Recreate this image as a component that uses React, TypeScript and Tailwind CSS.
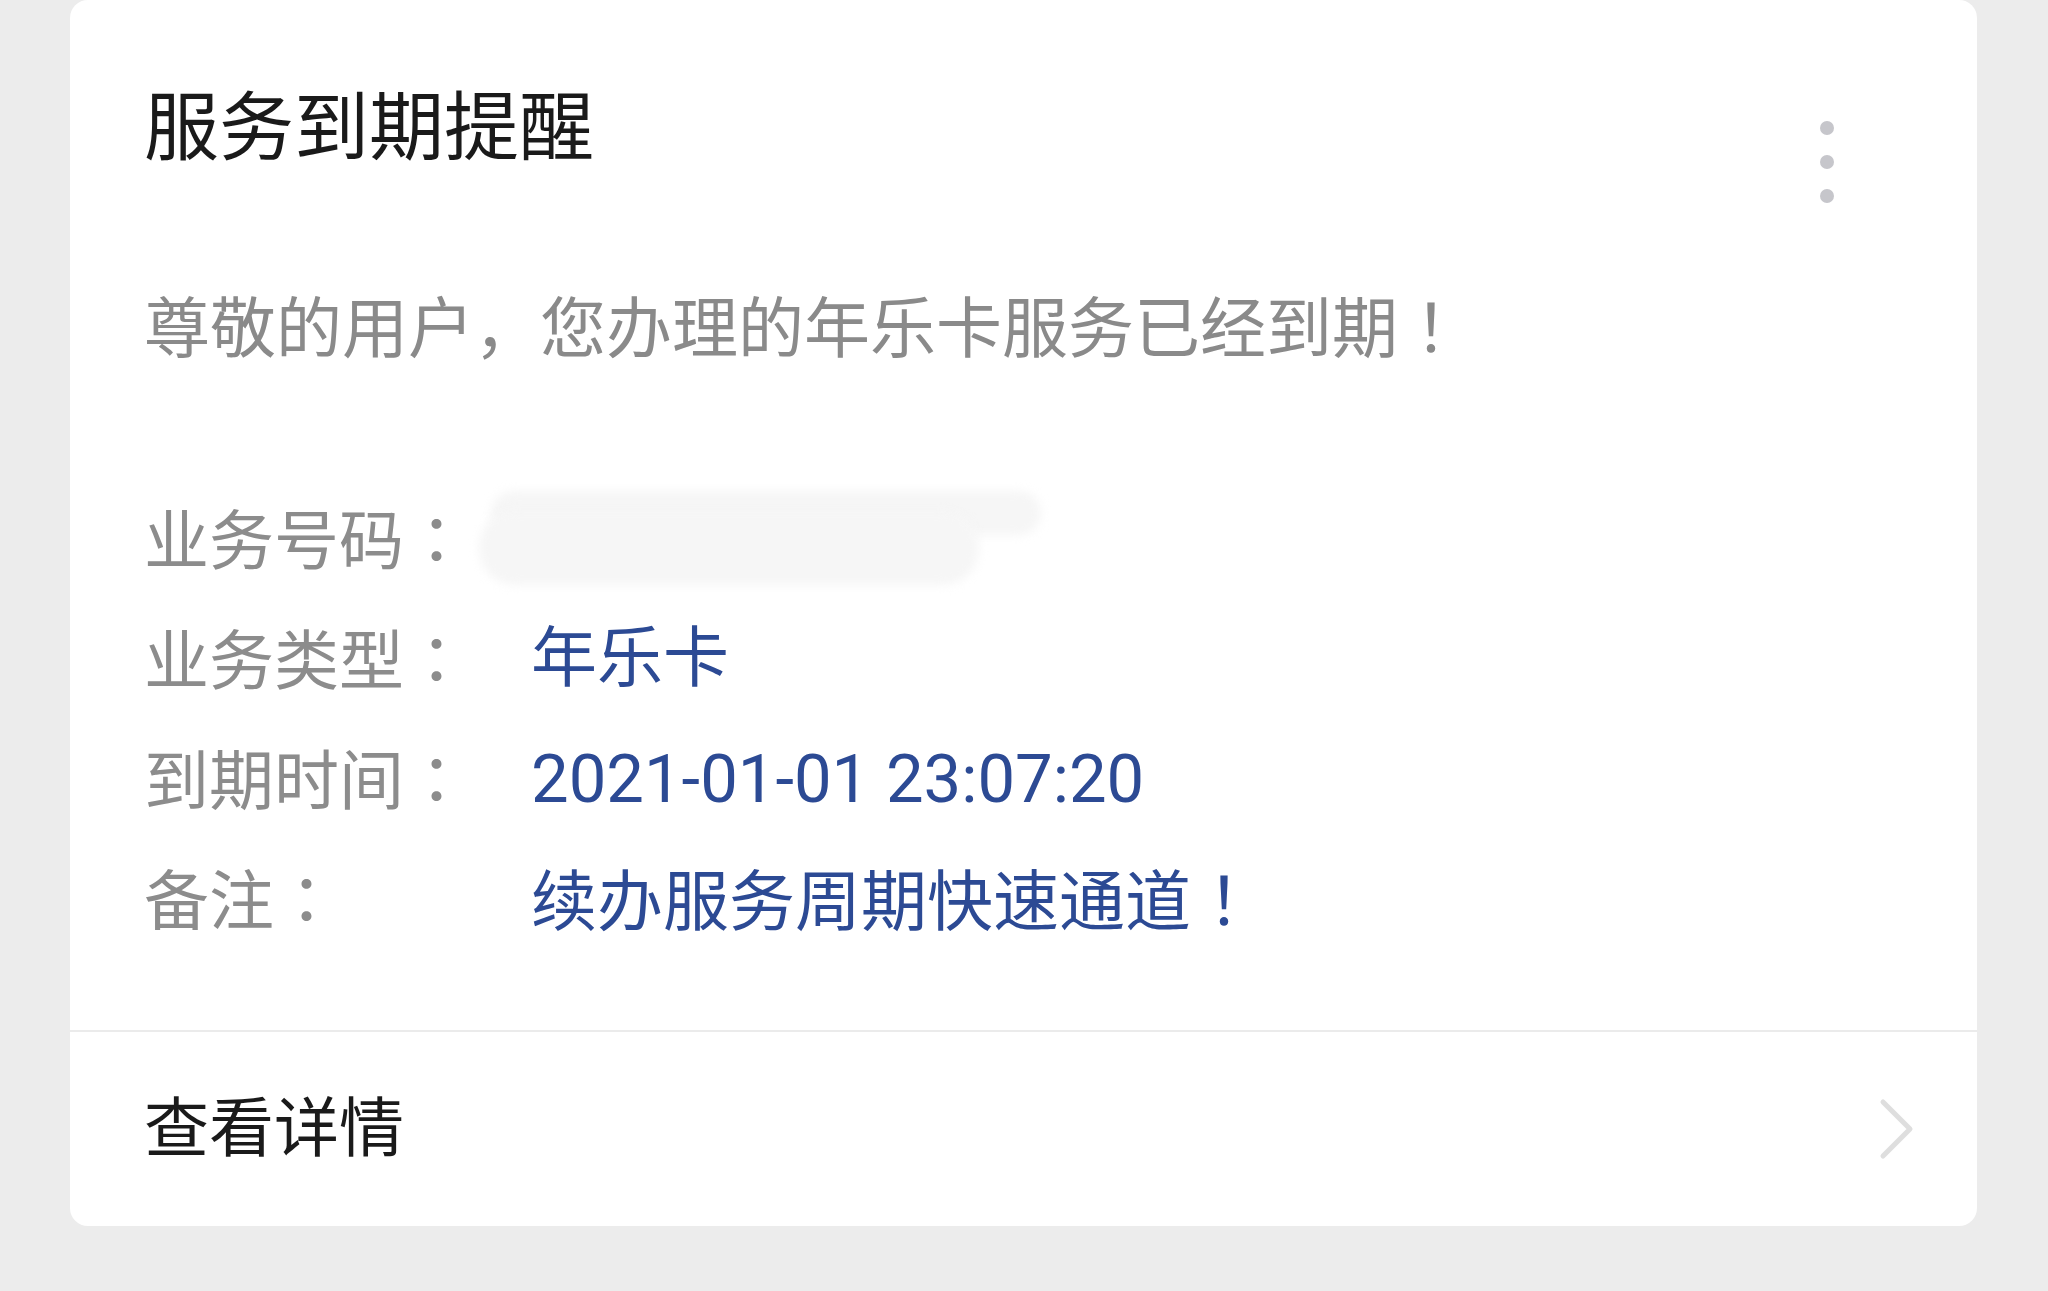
import React from "react";

const JP = "'Noto Sans CJK JP', sans-serif";

function T({ text }: { text: string }) {
  const parts = text.split(/([，：！])/);
  return (
    <>
      {parts.map((p, i) =>
        /^[，：！]$/.test(p) ? (
          <span key={i} style={{ fontFamily: JP }}>
            {p}
          </span>
        ) : (
          <React.Fragment key={i}>{p}</React.Fragment>
        )
      )}
    </>
  );
}

const rows: { label: string; value: string; blur?: boolean; num?: boolean }[] = [
  { label: "业务号码：", value: "", blur: true },
  { label: "业务类型：", value: "年乐卡" },
  { label: "到期时间：", value: "2021-01-01 23:07:20", num: true },
  { label: "备注：", value: "续办服务周期快速通道！" },
];

export default function App() {
  return (
    <div
      className="w-[2048px] h-[1291px] bg-[#ececec] overflow-hidden pl-[70px] [text-spacing-trim:space-all]"
      style={{ fontFamily: "Roboto, 'Noto Sans CJK SC', sans-serif" }}
    >
      <div className="w-[1907px] bg-white rounded-[18px] flex flex-col">
        <div className="flex items-start justify-between pl-[74px] pr-[143px] pt-[78px]">
          <div className="text-[75px] leading-[100px] text-[#1a1a1a]">服务到期提醒</div>
          <div className="mt-[43px] flex flex-col gap-[20px]">
            <div className="w-[14px] h-[14px] rounded-full bg-[#c6c6cb]" />
            <div className="w-[14px] h-[14px] rounded-full bg-[#c6c6cb]" />
            <div className="w-[14px] h-[14px] rounded-full bg-[#c6c6cb]" />
          </div>
        </div>
        <div className="pl-[74px] mt-[70px] text-[66px] leading-[100px] text-[#8a8a8a] whitespace-nowrap">
          <T text="尊敬的用户，您办理的年乐卡服务已经到期！" />
        </div>
        <div className="pl-[74px] mt-[99px] pb-[71px] flex flex-col">
          {rows.map((r) => (
            <div key={r.label} className="flex items-center h-[120px] text-[65px] leading-[120px] whitespace-nowrap">
              <div className="w-[387px] shrink-0 text-[#8c8c8c]">
                <T text={r.label} />
              </div>
              {r.blur ? (
                <div className="relative w-[580px] h-[120px] -ml-[54px]">
                  <div className="absolute left-[14px] top-[12px] w-[550px] h-[44px] rounded-full bg-[#f6f6f6] blur-[5px]" />
                  <div className="absolute left-[2px] top-[32px] w-[500px] h-[74px] rounded-[36px] bg-[#f6f6f6] blur-[5px]" />
                </div>
              ) : (
                <div className={r.num ? "text-[#2c4a94] text-[67px]" : "text-[#2c4a94] text-[66px]"}>
                  <T text={r.value} />
                </div>
              )}
            </div>
          ))}
        </div>
        <div className="h-[2px] bg-[#ebebeb]" />
        <div className="h-[194px] flex items-center justify-between pl-[74px] pr-[62px]">
          <div className="text-[65px] leading-[100px] text-[#1a1a1a]">查看详情</div>
          <svg width="36" height="62" viewBox="0 0 36 62" fill="none">
            <path d="M4 4 L31 31 L4 58" stroke="#dedede" strokeWidth="5" strokeLinecap="round" strokeLinejoin="round" />
          </svg>
        </div>
      </div>
    </div>
  );
}
